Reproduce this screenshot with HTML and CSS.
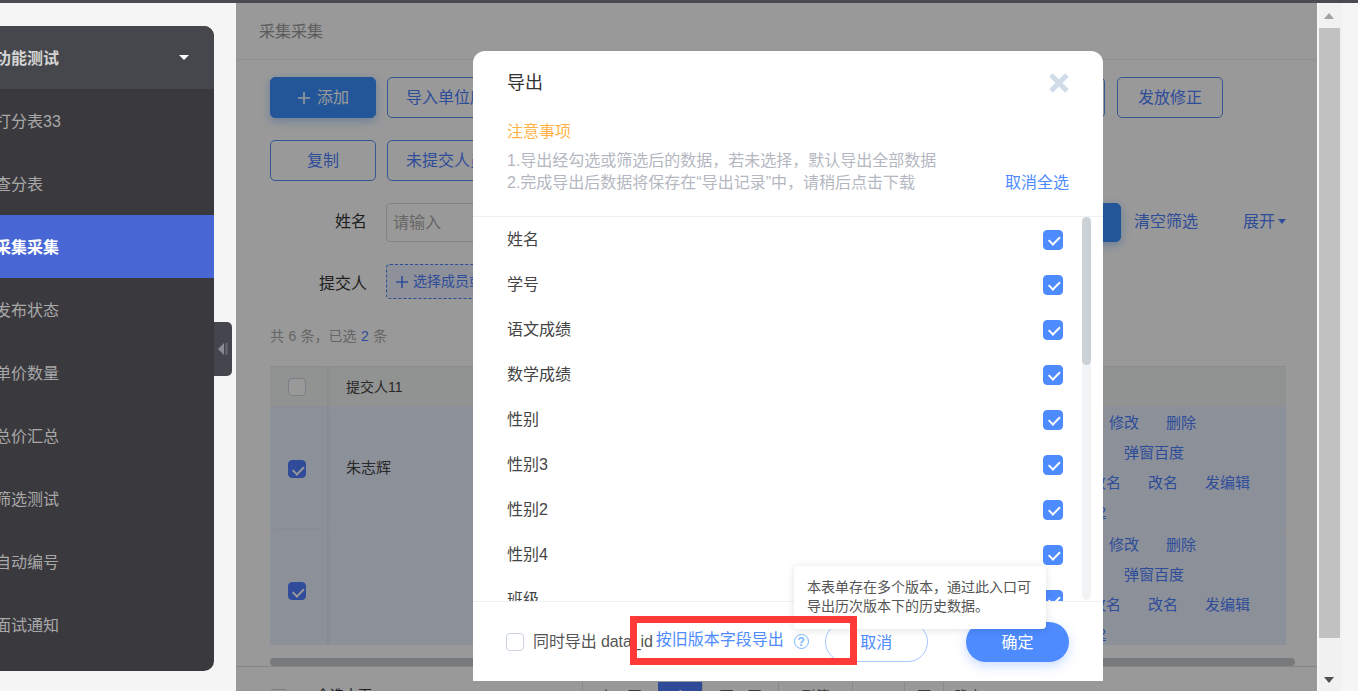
FILE: index.html
```html
<!DOCTYPE html>
<html lang="zh-CN">
<head>
<meta charset="utf-8">
<title>采集采集</title>
<link rel="stylesheet" href="styles.css">
</head>
<body>
<div class="topbar"></div>
<div class="shell">
  <aside class="side">
    <nav class="menu">
      <div class="menu-head"><span class="menu-text">功能测试</span><i class="caret-white"></i></div>
      <div class="menu-item"><span class="menu-text">打分表33</span></div>
      <div class="menu-item"><span class="menu-text">查分表</span></div>
      <div class="menu-item active"><span class="menu-text">采集采集</span></div>
      <div class="menu-item"><span class="menu-text">发布状态</span></div>
      <div class="menu-item"><span class="menu-text">单价数量</span></div>
      <div class="menu-item"><span class="menu-text">总价汇总</span></div>
      <div class="menu-item"><span class="menu-text">筛选测试</span></div>
      <div class="menu-item"><span class="menu-text">自动编号</span></div>
      <div class="menu-item"><span class="menu-text">面试通知</span></div>
    </nav>
    <div class="collapse">
      <svg width="12" height="14" viewBox="0 0 12 14"><path d="M7 1v12L1 7z" fill="#8a8a92"/><rect x="8.5" y="1" width="2" height="12" fill="#6a6a72"/></svg>
    </div>
  </aside>

  <main class="main">
    <div class="crumb">采集采集</div>
    <div class="content">
      <div class="tools top">
        <button class="btn primary"><svg class="plus" width="14" height="14" viewBox="0 0 14 14"><path d="M7 1v12M1 7h12" stroke="#fff" stroke-width="1.6"/></svg>添加</button>
        <button class="btn">导入单位库</button>
        <button class="btn push">导出数据</button>
        <button class="btn">发放修正</button>
      </div>
      <div class="tools">
        <button class="btn">复制</button>
        <button class="btn">未提交人员</button>
      </div>
      <div class="filter">
        <label class="filter-label">姓名</label>
        <div class="input">请输入</div>
        <button class="btn primary search">搜索</button>
        <a class="link clear">清空筛选</a>
        <a class="link expand">展开<i class="caret-blue"></i></a>
      </div>
      <div class="filter second">
        <label class="filter-label">提交人</label>
        <div class="picker"><svg class="plus-small" width="14" height="14" viewBox="0 0 14 14"><path d="M7 1v12M1 7h12" stroke="#4e80ff" stroke-width="1.6"/></svg>选择成员或部门</div>
      </div>
      <div class="count">共 6 条，已选 <b>2</b> 条</div>
      <div class="table">
        <div class="tr head">
          <div class="td-check"><span class="box"></span></div>
          <div class="td-name">提交人11</div>
        </div>
        <div class="tr sel">
          <div class="td-check"><span class="box on"></span></div>
          <div class="td-name">朱志辉</div>
          <div class="td-ops">
            <div class="ops l1"><a>修改</a><a>删除</a></div>
            <div class="ops l2"><a>弹窗百度</a></div>
            <div class="ops l3"><a>改名</a><a>改名</a><a>发编辑</a></div>
            <div class="ops l4"><a>2</a></div>
          </div>
        </div>
        <div class="tr sel">
          <div class="td-check"><span class="box on"></span></div>
          <div class="td-name"></div>
          <div class="td-ops">
            <div class="ops l1"><a>修改</a><a>删除</a></div>
            <div class="ops l2"><a>弹窗百度</a></div>
            <div class="ops l3"><a>改名</a><a>改名</a><a>发编辑</a></div>
            <div class="ops l4"><a>2</a></div>
          </div>
        </div>
      </div>
      <div class="hscroll"></div>
    </div>
    <div class="foot">
      <span class="box foot-box"></span>
      <span class="foot-text">全选本页</span>
      <div class="pager">
        <span class="pg w76">上一页</span>
        <span class="pg w44 cur">1</span>
        <span class="pg w76">下一页</span>
        <span class="pg w74">到第</span>
        <span class="pg w52"></span>
        <span class="pg w39">页</span>
        <span class="pg w50">确定</span>
      </div>
    </div>
    <div class="mask"></div>
  </main>

  <div class="vscroll">
    <i class="arrow-up"></i>
    <div class="vthumb"></div>
    <i class="arrow-down"></i>
  </div>
  <div class="strip"></div>

  <section class="modal">
    <header class="modal-head">
      <div class="title-row">
        <h2 class="modal-title">导出</h2>
        <svg class="close" width="20" height="20" viewBox="0 0 20 20"><path d="M2 2l16 16M18 2L2 18" stroke="#d0dbe8" stroke-width="5"/></svg>
      </div>
      <div class="notice">注意事项</div>
      <div class="note-row">
        <div class="notes">1.导出经勾选或筛选后的数据，若未选择，默认导出全部数据<br>2.完成导出后数据将保存在“导出记录”中，请稍后点击下载</div>
        <a class="blue-link">取消全选</a>
      </div>
    </header>
    <div class="list">
      <div class="row">姓名<span class="box on2"></span></div>
      <div class="row">学号<span class="box on2"></span></div>
      <div class="row">语文成绩<span class="box on2"></span></div>
      <div class="row">数学成绩<span class="box on2"></span></div>
      <div class="row">性别<span class="box on2"></span></div>
      <div class="row">性别3<span class="box on2"></span></div>
      <div class="row">性别2<span class="box on2"></span></div>
      <div class="row">性别4<span class="box on2"></span></div>
      <div class="row">班级<span class="box on2"></span></div>
      <div class="list-track"><div class="list-thumb"></div></div>
    </div>
    <footer class="modal-foot">
      <span class="box plain"></span>
      <span class="with-id">同时导出 data_id</span>
      <a class="blue-link old">按旧版本字段导出</a>
      <span class="help">?</span>
      <button class="pill ghost">取消</button>
      <button class="pill solid">确定</button>
    </footer>
    <div class="tooltip">本表单存在多个版本，通过此入口可<br>导出历次版本下的历史数据。</div>
    <div class="redbox"></div>
  </section>
</div>
</body>
</html>
```

FILE: styles.css
```css
* { box-sizing: border-box; }
html, body { margin: 0; height: 691px; overflow: hidden; }
body {
  font-family: "Liberation Sans", "Noto Sans CJK SC", sans-serif;
  font-size: 16px;
  color: #333;
  background: #f5f5f5;
}
a { cursor: pointer; }
button { font: inherit; cursor: pointer; }

.topbar { height: 3px; background: #4a4a52; }
.shell { position: relative; display: flex; height: 688px; overflow: hidden; }

/* sidebar */
.side { position: relative; flex: 0 0 236px; padding-top: 23px; background: #f5f5f5; }
.menu { width: 214px; height: 645px; background: #3a393e; border-radius: 0 10px 10px 0; overflow: hidden; }
.menu-head {
  position: relative; display: flex; align-items: center; height: 63px;
  background: #46474c; color: #d4d4d4; font-weight: 700;
}
.menu-item { display: flex; align-items: center; height: 63px; color: #a8a8a8; }
.menu-item.active { background: #4867d4; color: #fff; font-weight: 700; }
.menu-text { margin: 0 0 2px -5px; }
.caret-white {
  position: absolute; left: 179px; top: 29px; width: 0; height: 0;
  border-left: 5px solid transparent; border-right: 5px solid transparent; border-top: 5px solid #fff;
}
.collapse {
  position: absolute; left: 214px; top: 319px; width: 18px; height: 54px;
  display: flex; align-items: center; justify-content: center;
  background: #45454e; border-radius: 0 5px 5px 0;
}

/* main page, dimmed by the mask */
.main { position: relative; flex: 0 0 1081px; display: flex; flex-direction: column; background: #fff; overflow: hidden; }
.mask { position: absolute; inset: 0; background: rgba(0, 0, 0, .4); }
.crumb {
  flex: 0 0 57px; display: flex; align-items: center; padding: 0 0 3px 23px;
  border-bottom: 1px solid #f0f0f0; color: #999;
}
.content { flex: 0 0 606px; padding: 17px 31px 0 34px; }
.tools { display: flex; gap: 11px; margin-bottom: 22px; white-space: nowrap; }
.tools.top { margin-right: 63px; }
.btn {
  height: 41px; min-width: 106px; padding: 0 18px 3px; background: #fff;
  border: 1px solid #5b8ff0; border-radius: 5px; color: #4e80ff;
}
.btn.primary { background: #3a8fff; border-color: #3a8fff; color: #fff; box-shadow: 0 3px 10px rgba(58, 143, 255, .4); }
.btn.push { margin-left: auto; margin-right: 1px; }
.plus { margin-right: 6px; vertical-align: -2px; }

.filter { display: flex; align-items: center; height: 39px; margin-bottom: 22px; }
.filter.second { height: 35px; margin-bottom: 0; }
.filter-label { width: 97px; text-align: right; margin-right: 19px; padding-bottom: 5px; color: #333; }
.second .filter-label { padding-bottom: 0; }
.input {
  width: 330px; height: 39px; padding: 0 0 4px 6px; display: flex; align-items: center;
  border: 1px solid #ddd; border-radius: 4px; color: #aaa;
}
.search { margin-left: auto; height: 39px; }
.link { color: #4e80ff; padding-bottom: 6px; }
.clear { margin-left: 13px; }
.expand { margin-left: 45px; display: flex; align-items: center; }
.caret-blue {
  width: 0; height: 0; margin: 4px 0 0 3px;
  border-left: 4.5px solid transparent; border-right: 4.5px solid transparent; border-top: 5px solid #4e80ff;
}
.picker {
  width: 330px; height: 35px; display: flex; align-items: center; padding: 0 0 3px 8px;
  border: 1px dashed #4e80ff; border-radius: 4px; background: #edf2ff; color: #4e80ff; font-size: 14px;
}
.plus-small { margin: 3px 4px 0 0; }
.count { height: 20px; margin: 27px 0 20px; font-size: 14px; line-height: 20px; color: #aaa; word-spacing: .5px; }
.count b { font-weight: 400; color: #4e80ff; }

.table { height: 279px; overflow: hidden; border-top: 1px solid #ececec; }
.tr { position: relative; display: flex; height: 122px; border-bottom: 1px solid #eef2fb; }
.tr.head { height: 40px; background: #f2f5f3; color: #333; font-size: 14px; align-items: center; }
.tr.sel { background: #e9f0ff; }
.td-check {
  flex: 0 0 57px; align-self: stretch; display: flex; align-items: center; padding-left: 18px;
  box-shadow: 2px 0 2px rgba(0, 0, 0, .05);
}
.sel .td-check { padding-top: 2px; }
.td-name { padding: 0 0 2px 19px; align-self: center; font-size: 14px; color: #444; }
.sel .td-name { font-size: 15px; }
.td-ops { position: absolute; right: 0; top: 0; width: 400px; font-size: 15px; color: #4e80ff; }
.ops { display: flex; justify-content: flex-end; height: 30px; align-items: center; padding-bottom: 1px; }
.l1 { gap: 27px; padding-right: 90px; }
.l2 { padding-right: 102px; }
.l3 { gap: 27px; padding-right: 36px; }
.l4 { padding-right: 180px; text-decoration: underline; }
.hscroll { height: 8px; width: 1025px; margin-top: 13px; border-radius: 4px; background: #c6cacd; }

.foot { position: relative; flex: 1; display: flex; align-items: flex-start; padding: 15px 0 0 34px; border-top: 1px solid #e0e0e0; }
.foot-box { margin-top: 7px; }
.foot-text { margin: 2px 0 0 28px; font-size: 14px; color: #333; width: 64px; }
.pager { display: flex; margin-left: 202px; font-size: 14px; color: #666; }
.pg { height: 26px; display: flex; align-items: center; justify-content: center; border-left: 1px solid #e5e5e5; }
.pg.cur { background: #4e7cff; color: #fff; border-color: #4e7cff; }
.w76 { width: 76px; } .w44 { width: 44px; } .w74 { width: 74px; }
.w52 { width: 52px; } .w39 { width: 39px; } .w50 { width: 50px; }

/* checkboxes */
.box {
  position: relative; flex: none; display: inline-block; width: 18px; height: 18px;
  background: #fff; border: 1px solid #ccd3e0; border-radius: 4px;
}
.box.on { background: #4f7dff; border-color: #4f7dff; }
.box.on2 { width: 20px; height: 20px; margin-top: 3px; background: #4e8bff; border-color: #4e8bff; border-radius: 4px; }
.box.on::after, .box.on2::after {
  content: ""; position: absolute; left: 5.5px; top: 3px; width: 5px; height: 8.5px;
  border: solid #fff; border-width: 0 2.6px 2.6px 0; transform: rotate(45deg);
}
.box.on2::after { left: 6.5px; top: 3.5px; }

/* page scrollbar */
.vscroll { position: relative; flex: 0 0 25px; background: #f1f1f1; border-left: 2px solid #f7f7f7; }
.vthumb { position: absolute; left: 0; top: 25px; width: 21px; height: 610px; background: #c1c1c1; }
.arrow-up, .arrow-down {
  position: absolute; left: 5px; width: 0; height: 0;
  border-left: 5.5px solid transparent; border-right: 5.5px solid transparent;
}
.arrow-up { top: 10px; border-bottom: 6px solid #a3a3a3; }
.arrow-down { top: 674px; border-top: 6px solid #505050; }
.strip { flex: 1; background: #f5f5f5; }

/* modal */
.modal {
  position: absolute; left: 473px; top: 48px; width: 630px; height: 630px;
  display: flex; flex-direction: column; background: #fff; border-radius: 12px;
}
.modal-head { flex: 0 0 166px; padding: 20px 34px 0; border-bottom: 1px solid #eff0f2; }
.title-row { display: flex; justify-content: space-between; align-items: center; height: 24px; }
.modal-title { margin: 0 0 4px; font-size: 18px; font-weight: 400; color: #333; }
.notice { margin-top: 26px; line-height: 22px; color: #ffb347; }
.note-row { display: flex; justify-content: space-between; align-items: flex-end; margin-top: 7px; }
.notes { line-height: 22px; color: #b4b7bf; white-space: nowrap; }
.blue-link { color: #4e8bff; line-height: 22px; }

.list { position: relative; flex: 0 0 384px; overflow: hidden; }
.row { display: flex; justify-content: space-between; align-items: center; height: 45px; padding: 0 40px 3px 34px; color: #444; }
.list-track { position: absolute; left: 609px; top: 0; width: 9px; height: 383px; background: #f2f3f5; border-radius: 5px; }
.list-thumb { height: 148px; background: #ccd1d6; border-radius: 5px; }

.modal-foot {
  flex: 1; display: flex; align-items: center; padding: 0 34px 0 33px;
  border-top: 1px solid #eff0f2; background: #fff; position: relative;
}
.plain { border-color: #ccd3e0; }
.with-id { margin: 0 0 3px 9px; color: #555; white-space: nowrap; letter-spacing: -.1px; }
.old { margin: 0 0 3px 3px; white-space: nowrap; }
.help {
  width: 15px; height: 15px; margin-left: 10px; display: flex; align-items: center; justify-content: center;
  border: 1.5px solid #79b9ff; border-radius: 50%; color: #79b9ff; font-size: 12px; font-weight: 700; line-height: 1;
}
.pill { width: 103px; height: 40px; padding-bottom: 3px; border-radius: 20px; }
.ghost { margin-left: 16px; background: #fff; border: 1px solid #a9c7ff; color: #4e8bff; }
.solid { margin-left: auto; background: #4e8bff; border: 0; color: #fff; box-shadow: 0 4px 12px rgba(78, 139, 255, .3); }

.tooltip {
  position: absolute; left: 321px; top: 515px; width: 252px; height: 63px; padding: 12px 13px;
  background: #fff; border-radius: 4px; box-shadow: 0 1px 8px rgba(0, 0, 0, .12);
  font-size: 14px; line-height: 19px; color: #555; white-space: nowrap;
}
.redbox {
  position: absolute; left: 157px; top: 565px; width: 227px; height: 49px;
  border: 7px solid #ff3838;
}
```
